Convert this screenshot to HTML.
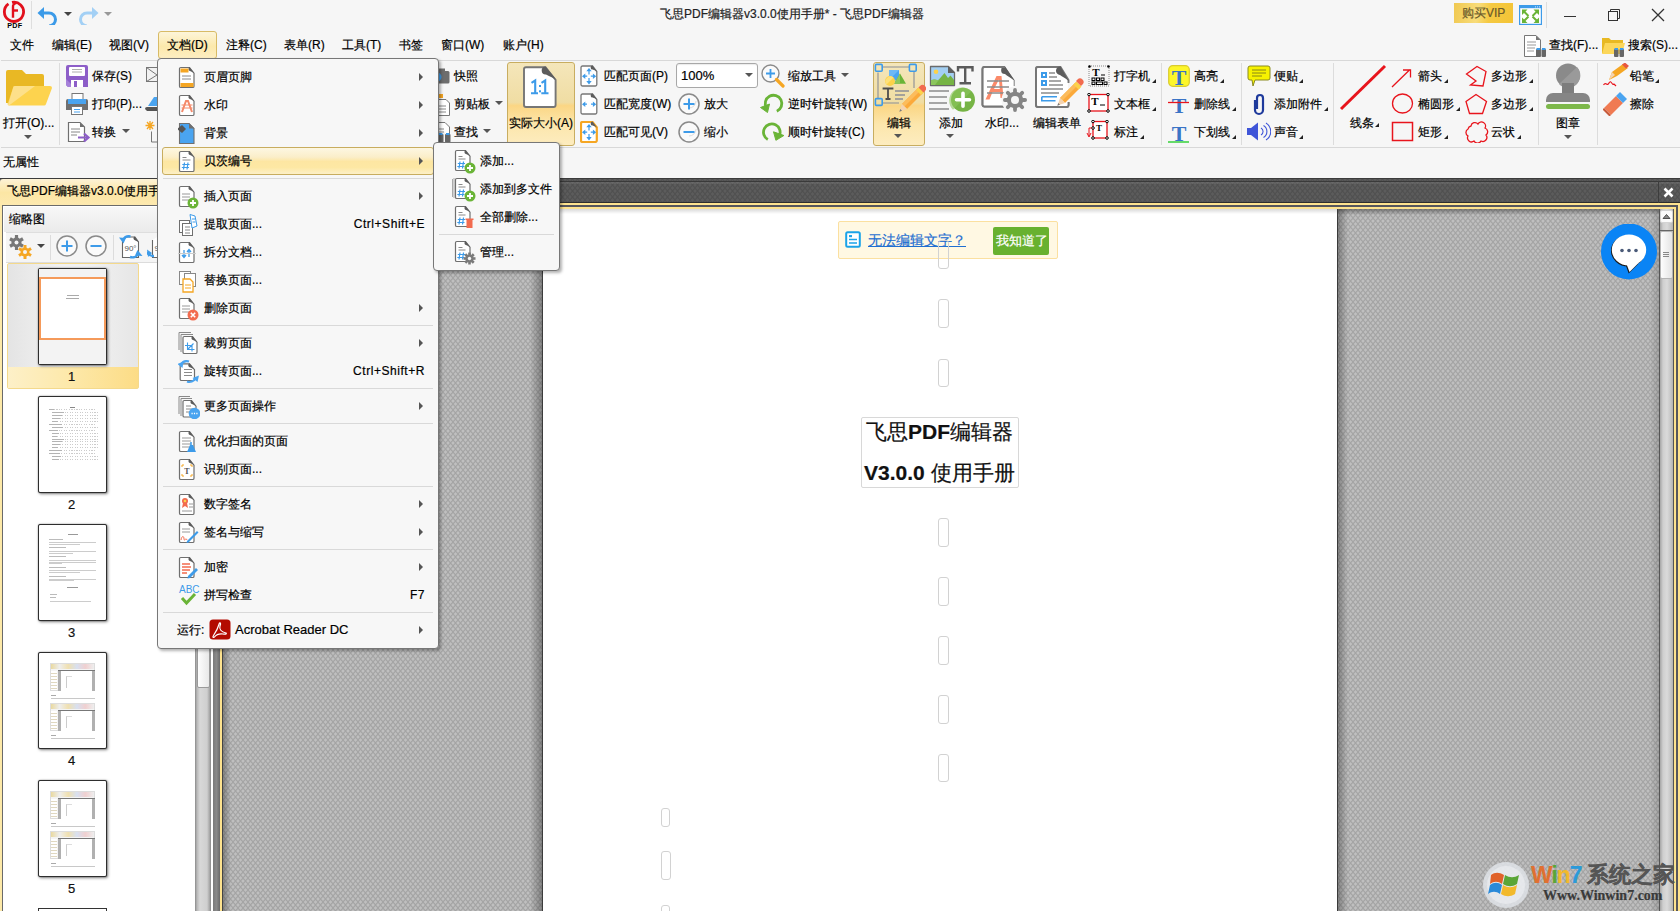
<!DOCTYPE html><html><head><meta charset="utf-8"><style>*{box-sizing:border-box;margin:0;padding:0}
html,body{width:1680px;height:911px;overflow:hidden;background:#f6f6f6;font-family:"Liberation Sans",sans-serif;font-size:12px;color:#000;position:relative}
.a{position:absolute;display:block}
.t{position:absolute;white-space:nowrap;line-height:14px;font-size:12px;-webkit-text-stroke:.2px currentColor}
.hl{position:absolute;height:1px;background:#dcdcdc}
.vl{position:absolute;width:1px;background:#dcdcdc}
.gray{background-color:#b6b6b6;background-image:repeating-linear-gradient(45deg,rgba(0,0,0,.06) 0 1.2px,transparent 1.2px 3.6px),repeating-linear-gradient(-45deg,rgba(0,0,0,.06) 0 1.2px,transparent 1.2px 3.6px)}
.dark{background-color:#5e5e5e;background-image:repeating-linear-gradient(45deg,rgba(0,0,0,.12) 0 1.2px,transparent 1.2px 3.6px),repeating-linear-gradient(-45deg,rgba(0,0,0,.12) 0 1.2px,transparent 1.2px 3.6px)}
.menu{position:absolute;background:#f7f7f7;border:1px solid #777;border-radius:4px;box-shadow:2px 2px 3px rgba(0,0,0,.3)}
.arr{position:absolute;width:0;height:0;border-top:4px solid transparent;border-bottom:4px solid transparent;border-left:4px solid #555}
.sep{position:absolute;height:1px;background:#d9d9d9}
.dd{position:absolute;width:0;height:0;border-left:4px solid transparent;border-right:4px solid transparent;border-top:4px solid #555}
.ca{position:absolute;width:0;height:0;border-left:4px solid transparent;border-bottom:4px solid #222}
.ph{position:absolute;border:1px solid #d2d2d2;border-radius:3px;background:transparent}
.hil{position:absolute;border:1px solid #d8bb66;border-radius:3px;background:linear-gradient(#f7eac4,#f2dea6 45%,#fcd98a 55%,#fde9b6)}
</style></head><body>
<svg class="a" style="left:0px;top:0px" width="30" height="30" viewBox="0 0 30 30"><path d="M12 2.4A9.6 9.6 0 1 1 8.5 3.9" fill="none" stroke="#e2101c" stroke-width="2.8"/><path d="M13 17.8V7A3.5 3.5 0 0 1 16.5 3" fill="none" stroke="#e2101c" stroke-width="2.4"/><path d="M13 10.5H18" stroke="#e2101c" stroke-width="2.4"/><text x="14.8" y="28" font-size="7.2" font-weight="bold" text-anchor="middle" font-family="Liberation Sans" fill="#000" letter-spacing=".3">PDF</text></svg>
<div class="a" style="left:31px;top:1px;width:1px;height:28px;background:#dedede"></div>
<svg class="a" style="left:37px;top:5px" width="22" height="20" viewBox="0 0 22 20"><path d="M4 8 H12 A6.5 6.5 0 0 1 12 21" fill="none" stroke="#3b9ae8" stroke-width="3"/><path d="M0.5 8 L7 2 L7 14 Z" fill="#3b9ae8"/></svg>
<div class="dd" style="left:64px;top:12px;border-top-color:#444"></div>
<svg class="a" style="left:77px;top:5px" width="22" height="20" viewBox="0 0 22 20"><path d="M18 8 H10 A6.5 6.5 0 0 0 10 21" fill="none" stroke="#a3d0f5" stroke-width="3"/><path d="M21.5 8 L15 2 L15 14 Z" fill="#a3d0f5"/></svg>
<div class="dd" style="left:104px;top:12px;border-top-color:#999"></div>
<div class="t" style="left:660px;top:7px;color:#222;">飞思PDF编辑器v3.0.0使用手册* - 飞思PDF编辑器</div>
<div class="a" style="left:1454px;top:3px;width:59px;height:20px;background:linear-gradient(100deg,#f0c850,#f8dc7a 40%,#f5c942 60%,#f4c436)"></div>
<div class="t" style="left:1462px;top:6px;color:#6b5a2a;">购买VIP</div>
<svg class="a" style="left:1519px;top:5px" width="23" height="20" viewBox="0 0 23 20"><rect x="0.6" y="0.6" width="21.8" height="18.8" fill="#fff" stroke="#3d9be9" stroke-width="1.2"/><rect x="0.6" y="0.6" width="21.8" height="2.6" fill="#3d9be9"/><path d="M16 1.9h1M18 1.9h1M20 1.9h1" stroke="#fff" stroke-width=".8"/><g fill="#6ab437"><path d="M3 4.5H8.5L3 10Z M20 4.5H14.5L20 10Z M3 18H8.5L3 12.5Z M20 18H14.5L20 12.5Z"/></g><path d="M5 6.5L9.5 11M18 6.5L13.5 11M5 16L9.5 11.5M18 16L13.5 11.5" stroke="#6ab437" stroke-width="2"/></svg>
<div class="a" style="left:1546px;top:2px;width:1px;height:26px;background:#dedede"></div>
<div class="a" style="left:1564px;top:16px;width:12px;height:1px;background:#333"></div>
<svg class="a" style="left:1607px;top:8px" width="14" height="14" viewBox="0 0 14 14"><rect x="1.5" y="3.5" width="9" height="9" fill="none" stroke="#333"/><path d="M3.5 3.5V1.5H12.5V10.5H10.5" fill="none" stroke="#333"/></svg>
<svg class="a" style="left:1651px;top:8px" width="14" height="14" viewBox="0 0 14 14"><path d="M1 1L13 13M13 1L1 13" stroke="#333" stroke-width="1.3"/></svg>
<div class="hil" style="left:158px;top:31px;width:59px;height:28px;background:linear-gradient(#fdf5d9,#fce9ac 55%,#fdeec2)"></div>
<div class="t" style="left:10px;top:38px;">文件</div>
<div class="t" style="left:52px;top:38px;">编辑(E)</div>
<div class="t" style="left:109px;top:38px;">视图(V)</div>
<div class="t" style="left:167px;top:38px;">文档(D)</div>
<div class="t" style="left:226px;top:38px;">注释(C)</div>
<div class="t" style="left:284px;top:38px;">表单(R)</div>
<div class="t" style="left:342px;top:38px;">工具(T)</div>
<div class="t" style="left:399px;top:38px;">书签</div>
<div class="t" style="left:441px;top:38px;">窗口(W)</div>
<div class="t" style="left:503px;top:38px;">账户(H)</div>
<svg class="a" style="left:1523px;top:34px" width="24" height="24" viewBox="0 0 24 24"><path d="M1.5 1.5H13L17.5 6V22.5H1.5Z" fill="#fff" stroke="#777"/><path d="M13 1.5V6H17.5" fill="#777"/><path d="M4 8h9M4 11h9M4 14h8M4 17h7" stroke="#999"/><rect x="13" y="15" width="4.5" height="8" rx="1" fill="#666"/><rect x="18.5" y="15" width="4.5" height="8" rx="1" fill="#666"/><rect x="13.5" y="14" width="3.5" height="2" fill="#3d9be9"/><rect x="19" y="14" width="3.5" height="2" fill="#3d9be9"/></svg>
<div class="t" style="left:1549px;top:38px;">查找(F)...</div>
<svg class="a" style="left:1601px;top:34px" width="25" height="24" viewBox="0 0 25 24"><path d="M1 4H8L10 6H22V19H1Z" fill="#e8b923"/><path d="M1 20L4 9H24L21 20Z" fill="#fcd75a"/><rect x="13" y="15" width="4.5" height="8" rx="1" fill="#666"/><rect x="18.5" y="15" width="4.5" height="8" rx="1" fill="#666"/><rect x="13.5" y="14" width="3.5" height="2" fill="#3d9be9"/><rect x="19" y="14" width="3.5" height="2" fill="#3d9be9"/></svg>
<div class="t" style="left:1628px;top:38px;">搜索(S)...</div>
<div class="hl" style="left:1px;top:60px;width:1679px;background:#d8d8d8"></div>
<svg class="a" style="left:5px;top:69px" width="48" height="38" viewBox="0 0 48 38"><path d="M1 3a2 2 0 0 1 2-2H17L21 5H37a2 2 0 0 1 2 2V34H1Z" fill="#e9b824"/><path d="M8 19a2 2 0 0 1 2-2H45a2 2 0 0 1 2 2L41 35a2 2 0 0 1-2 1.5H4a2 2 0 0 1-1.5-1.5Z" fill="#fdd34e"/><path d="M3 36L8 19a2 2 0 0 1 2-2H30L4 36.5Z" fill="#fde08a"/></svg>
<div class="t" style="left:3px;top:116px;">打开(O)...</div>
<div class="dd" style="left:24px;top:135px;border-top-color:#555"></div>
<div class="a" style="left:59px;top:63px;width:1px;height:82px;background:#dcdcdc"></div>
<svg class="a" style="left:66px;top:65px" width="22" height="22" viewBox="0 0 22 22"><path d="M0 2a2 2 0 0 1 2-2H20a2 2 0 0 1 2 2V22H2L0 20Z" fill="#8d5ec8"/><path d="M0 14L8 22H2L0 20Z" fill="#a681d9"/><rect x="3" y="2" width="16" height="9" rx="1" fill="#fff"/><path d="M6 4.5h10M6 7h10" stroke="#999" stroke-width=".8"/><rect x="5" y="15" width="12" height="7" fill="#fff"/><rect x="8" y="16" width="3" height="6" fill="#8d5ec8"/></svg>
<div class="t" style="left:92px;top:69px;">保存(S)</div>
<svg class="a" style="left:66px;top:93px" width="22" height="22" viewBox="0 0 22 22"><rect x="6" y="0.5" width="11" height="7" fill="#fff" stroke="#777"/><path d="M0 8a2 2 0 0 1 2-2H20a2 2 0 0 1 2 2V17H0Z" fill="#6f6f6f"/><rect x="2" y="6" width="18" height="5" fill="#4aa4f0"/><rect x="5.5" y="13.5" width="11" height="8" fill="#fff" stroke="#777"/><path d="M8 16.5h6M8 19h6" stroke="#4aa4f0"/></svg>
<div class="t" style="left:92px;top:97px;">打印(P)...</div>
<svg class="a" style="left:67px;top:121px" width="24" height="22" viewBox="0 0 24 22"><path d="M1.5 1.5H13L17.5 6V20.5H1.5Z" fill="#fff" stroke="#6f6f6f" stroke-width="1.2"/><path d="M13 1.5L17.5 6H13Z" fill="#6f6f6f"/><path d="M4 8h9M4 11h9M4 14h6" stroke="#888"/><path d="M11 16.5H21M17 12.5L21.5 16.5L17 20.5" stroke="#8d5ec8" stroke-width="2.2" fill="none"/></svg>
<div class="t" style="left:92px;top:125px;">转换</div>
<div class="dd" style="left:122px;top:129px;border-top-color:#555"></div>
<svg class="a" style="left:146px;top:67px" width="12" height="16" viewBox="0 0 12 16"><rect x="0.5" y="0.5" width="14" height="14" fill="#f2f2f2" stroke="#777"/><path d="M0.5 0.5L11 8L0.5 14.5" fill="none" stroke="#777"/></svg>
<svg class="a" style="left:145px;top:96px" width="13" height="15" viewBox="0 0 13 15"><path d="M0 13a2 2 0 0 1 2-2H14V15H2Z" fill="#555"/><path d="M3 10L9 1H14V10Z" fill="#4aa4f0"/></svg>
<svg class="a" style="left:145px;top:120px" width="13" height="23" viewBox="0 0 13 23"><path d="M5 1v9M0.5 5.5h9M2 2l6 7M8 2l-6 7" stroke="#f5a623" stroke-width="1.3"/><path d="M6.5 11.5V22H14" fill="none" stroke="#777"/></svg>
<svg class="a" style="left:438px;top:68px" width="12" height="16" viewBox="0 0 12 16"><rect x="-6" y="3" width="17.5" height="12.5" rx="1.5" fill="#6d6d6d"/><rect x="-2" y="0.5" width="9" height="4" fill="#6d6d6d"/><circle cx="-1" cy="9" r="4.5" fill="#3d9be9"/></svg>
<div class="t" style="left:454px;top:69px;">快照</div>
<svg class="a" style="left:438px;top:93px" width="12" height="24" viewBox="0 0 12 24"><rect x="0" y="1" width="5" height="4" fill="#f5a623"/><path d="M-2 6.5H8L11.5 10V22.5H-2Z" fill="#fff" stroke="#777"/><path d="M1 13h7M1 16h7M1 19h7" stroke="#888"/></svg>
<div class="t" style="left:454px;top:97px;">剪贴板</div>
<div class="dd" style="left:495px;top:101px;border-top-color:#555"></div>
<svg class="a" style="left:438px;top:121px" width="14" height="22" viewBox="0 0 14 22"><path d="M-2 1.5H7L11.5 6V16" fill="#fff" stroke="#777"/><path d="M0 8h6M0 11h6" stroke="#888"/><rect x="0" y="13" width="5.5" height="8.5" rx="1" fill="#666"/><rect x="7" y="13" width="5.5" height="8.5" rx="1" fill="#666"/><rect x="1" y="12" width="3.5" height="2" fill="#3d9be9"/><rect x="8" y="12" width="3.5" height="2" fill="#3d9be9"/></svg>
<div class="t" style="left:454px;top:125px;">查找</div>
<div class="dd" style="left:483px;top:129px;border-top-color:#555"></div>
<div class="hil" style="left:507px;top:62px;width:68px;height:84px;border-color:#c8ad60;background:linear-gradient(#f4e6ba,#f0dda3 48%,#fbd684 52%,#fce6ac 75%,#fdecbf)"></div>
<svg class="a" style="left:518px;top:62px" width="44" height="50" viewBox="0 0 44 50"><path d="M8 5.3H27.5L37.6 18V43A2 2 0 0 1 35.6 45H8A2 2 0 0 1 6 43V7.3A2 2 0 0 1 8 5.3Z" fill="#fff" stroke="#767676" stroke-width="1.9"/><path d="M27.5 4.4L38.6 18C35 15.5 31 14 28 12.5A3.5 3.5 0 0 1 27.5 4.4Z" fill="#5c5c5c"/><path d="M13.5 20.8L17.2 18.5V31.5M13 31.2H20M23.5 20.8L27.2 18.5V31.5M23.3 31.2H30.5" stroke="#3d9be9" stroke-width="2.1" fill="none"/><rect x="21" y="23" width="2" height="2" fill="#3d9be9"/><rect x="21" y="28.3" width="2" height="2" fill="#3d9be9"/></svg>
<div class="t" style="left:509px;top:116px;">实际大小(A)</div>
<svg class="a" style="left:580px;top:65px" width="18" height="22" viewBox="0 0 18 22"><path d="M2.5 1H12.5L16.8 6.5V19.5A1.5 1.5 0 0 1 15.3 21H2.5A1.5 1.5 0 0 1 1 19.5V2.5A1.5 1.5 0 0 1 2.5 1Z" fill="#fff" stroke="#777" stroke-width="1.3"/><path d="M12.5 0.5L17.2 6.8C15.5 5.5 14 5 12.8 4.5A2 2 0 0 1 12.5 0.5Z" fill="#5c5c5c"/><g fill="#3d9be9" stroke="#3d9be9" stroke-width="1.2"><path d="M9 6V9.5M9 13V16.5M4.5 11.2H7.2M10.8 11.2H13.8" fill="none"/><path d="M9 3L6.3 6.3H11.7Z M9 19.4L6.3 16.1H11.7Z M2 11.2L5.3 8.5V13.9Z M16.2 11.2L12.9 8.5V13.9Z" stroke="none"/></g></svg>
<div class="t" style="left:604px;top:69px;">匹配页面(P)</div>
<svg class="a" style="left:580px;top:93px" width="18" height="22" viewBox="0 0 18 22"><path d="M2.5 1H12.5L16.8 6.5V19.5A1.5 1.5 0 0 1 15.3 21H2.5A1.5 1.5 0 0 1 1 19.5V2.5A1.5 1.5 0 0 1 2.5 1Z" fill="#fff" stroke="#777" stroke-width="1.3"/><path d="M12.5 0.5L17.2 6.8C15.5 5.5 14 5 12.8 4.5A2 2 0 0 1 12.5 0.5Z" fill="#5c5c5c"/><g fill="#3d9be9" stroke="#3d9be9" stroke-width="1.2"><path d="M4.5 11.2H7M11 11.2H13.5" fill="none"/><path d="M2 11.2L5.3 8.5V13.9Z M16.2 11.2L12.9 8.5V13.9Z" stroke="none"/></g></svg>
<div class="t" style="left:604px;top:97px;">匹配宽度(W)</div>
<svg class="a" style="left:580px;top:121px" width="18" height="22" viewBox="0 0 18 22"><path d="M2.5 1H12.5L16.8 6.5V19.5A1.5 1.5 0 0 1 15.3 21H2.5A1.5 1.5 0 0 1 1 19.5V2.5A1.5 1.5 0 0 1 2.5 1Z" fill="#fff" stroke="#f5a623" stroke-width="2.2"/><path d="M12.5 0.5L17.2 6.8C15.5 5.5 14 5 12.8 4.5A2 2 0 0 1 12.5 0.5Z" fill="#5c5c5c"/><g fill="#3d9be9" stroke="#3d9be9" stroke-width="1.2"><path d="M9 6V9.5M9 13V16.5M4.5 11.2H7.2M10.8 11.2H13.8" fill="none"/><path d="M9 3L6.3 6.3H11.7Z M9 19.4L6.3 16.1H11.7Z M2 11.2L5.3 8.5V13.9Z M16.2 11.2L12.9 8.5V13.9Z" stroke="none"/></g></svg>
<div class="t" style="left:604px;top:125px;">匹配可见(V)</div>
<div class="a" style="left:676px;top:63px;width:82px;height:25px;background:#fff;border:1px solid #a8a8a8;border-radius:3px;box-shadow:inset 0 1px 1px rgba(0,0,0,.08)"></div>
<div class="t" style="left:681px;top:69px;font-size:13px;">100%</div>
<div class="dd" style="left:745px;top:73px;border-top-color:#555"></div>
<svg class="a" style="left:678px;top:93px" width="22" height="22" viewBox="0 0 22 22"><circle cx="11" cy="11" r="10" fill="#fafafa" stroke="#8a8a8a" stroke-width="1.5"/><path d="M11 15A7 7 0 0 0 18 8" stroke="#ddd" fill="none"/><path d="M5.5 11H16.5" stroke="#3d9be9" stroke-width="2"/><path d="M11 5.5V16.5" stroke="#3d9be9" stroke-width="2"/></svg>
<div class="t" style="left:704px;top:97px;">放大</div>
<svg class="a" style="left:678px;top:121px" width="22" height="22" viewBox="0 0 22 22"><circle cx="11" cy="11" r="10" fill="#fafafa" stroke="#8a8a8a" stroke-width="1.5"/><path d="M11 15A7 7 0 0 0 18 8" stroke="#ddd" fill="none"/><path d="M5.5 11H16.5" stroke="#3d9be9" stroke-width="2"/></svg>
<div class="t" style="left:704px;top:125px;">缩小</div>
<svg class="a" style="left:761px;top:64px" width="24" height="24" viewBox="0 0 24 24"><circle cx="9.5" cy="9.5" r="8.5" fill="#fafafa" stroke="#8a8a8a" stroke-width="1.4"/><path d="M5 9.5H14M9.5 5V14" stroke="#3d9be9" stroke-width="1.8"/><path d="M15.5 15.5L22 22" stroke="#f5a623" stroke-width="3.2" stroke-linecap="round"/></svg>
<div class="t" style="left:788px;top:69px;">缩放工具</div>
<div class="dd" style="left:841px;top:73px;border-top-color:#555"></div>
<svg class="a" style="left:760px;top:92px" width="26" height="24" viewBox="0 0 26 24"><path d="M16.8 19.2A8.3 8.3 0 1 0 6.5 16" fill="none" stroke="#6ab437" stroke-width="2.8"/><path d="M0.5 15.5L9.5 12L7.5 20.5Z" fill="#6ab437" stroke="#6ab437" stroke-linejoin="round"/></svg>
<div class="t" style="left:788px;top:97px;">逆时针旋转(W)</div>
<svg class="a" style="left:762px;top:120px" width="26" height="24" viewBox="0 0 26 24"><path d="M5.8 19.5A8.3 8.3 0 1 1 17.3 15.8" fill="none" stroke="#6ab437" stroke-width="2.8"/><path d="M11.5 11.8L21.9 15.5L13.9 20.3Z" fill="#6ab437" stroke="#6ab437" stroke-linejoin="round"/></svg>
<div class="t" style="left:788px;top:125px;">顺时针旋转(C)</div>
<div class="hil" style="left:873px;top:62px;width:52px;height:84px;border-color:#c8ad60;background:linear-gradient(#f4e6ba,#f0dda3 48%,#fbd684 52%,#fce6ac 75%,#fdecbf)"></div>
<svg class="a" style="left:872px;top:62px" width="54" height="54" viewBox="0 0 54 54"><path d="M10.5 5H37M42 10V26M6 10.5V36M10.5 41H27" stroke="#8a8d96" stroke-width="1.1" fill="none"/><rect x="3.4" y="2.4" width="6.8" height="6.8" rx="1" fill="none" stroke="#3d9be9" stroke-width="1.6"/><rect x="37.4" y="2.4" width="6.8" height="6.8" rx="1" fill="none" stroke="#3d9be9" stroke-width="1.6"/><rect x="3.4" y="36.6" width="6.8" height="6.8" rx="1" fill="none" stroke="#3d9be9" stroke-width="1.6"/><rect x="17" y="8" width="10" height="10.5" fill="#4aa4f0"/><path d="M17 8H27L17 18Z" fill="#6cb8f5"/><path d="M22 21.8L28 11.5L34 21.8Z" fill="#6ab437"/><path d="M22 21.8L28 11.5V21.8Z" fill="#8cc65e"/><circle cx="18" cy="19" r="5" fill="#fcd24a"/><path d="M14.5 22.5L21.5 15.5A5 5 0 0 0 14.5 22.5Z" fill="#fde07a"/><path d="M11.5 27.5V26.5H20.5V27.5M16 26.5V37M13.5 37H18.5" stroke="#4d4d4d" stroke-width="1.8" fill="none"/><path d="M23 29h14M23 33h10M23 37h8" stroke="#8a8d96" stroke-width="1.3"/><path d="M30 42L46 26L51 31L35 47Z" fill="#fba93a"/><path d="M30 42L46 26L48.5 28.5L32.5 44.5Z" fill="#fcbc5c"/><path d="M44 28L47 25L52 30L49 33Z" fill="#fcd24a"/><path d="M46.5 25.5L48 24A2.5 2.5 0 0 1 53 29L51.5 30.5Z" fill="#f26b4f"/><path d="M30 42L35 47L27.5 49.5Z" fill="#f4d3b0"/><path d="M28.3 47L30 48.8L27.3 49.7Z" fill="#777"/></svg>
<div class="t" style="left:887px;top:116px;">编辑</div>
<div class="dd" style="left:894px;top:134px;border-top-color:#555"></div>
<svg class="a" style="left:926px;top:62px" width="52" height="54" viewBox="0 0 52 54"><path d="M4.5 4.5H22.5L28.5 10.5V23.5H4.5Z" fill="#a3cff2" stroke="#6a6a6a" stroke-width="1.3" stroke-linejoin="round"/><path d="M22 4L29 11H22Z" fill="#5f5f5f"/><path d="M5 23V18.5C7 17 9.5 17 12 18.5L18.5 11L22 16L24.5 13.5L28 18V23Z" fill="#76b445"/><path d="M5 23V18.5C7 17 9.5 17 12 18.5L14 16.3L9 23Z" fill="#8cc65e"/><circle cx="10" cy="9.8" r="2.3" fill="#fcd24a"/><path d="M32 9.5V5.3H46.5V9.5M39.2 5.3V21M33.5 21.3H45" stroke="#5a5a5a" stroke-width="2.4" fill="none"/><path d="M3 29h20M3 35h18M3 41h18M3 47h20" stroke="#8a8a8a" stroke-width="1.6"/><circle cx="37" cy="37.8" r="12" fill="#76b445"/><path d="M27 47.8L45.5 29.3A12 12 0 0 0 27 47.8Z" fill="#8cc65e" opacity=".6"/><path d="M30.5 37.8H43.5M37 31.3V44.3" stroke="#fff" stroke-width="3.6" stroke-linecap="round"/></svg>
<div class="t" style="left:939px;top:116px;">添加</div>
<div class="dd" style="left:946px;top:134px;border-top-color:#555"></div>
<svg class="a" style="left:978px;top:62px" width="54" height="54" viewBox="0 0 54 54"><path d="M26.5 5H6A2 2 0 0 0 4.5 7V43A2 2 0 0 0 6.5 44.5H26" fill="#fff" stroke="#777" stroke-width="1.9"/><path d="M26 5L35.7 18.5V24" fill="#fff" stroke="#777" stroke-width="1.9"/><path d="M5.5 6H26L35.7 18.5V44H5.5Z" fill="#fff"/><path d="M27 4.3L36.5 18.5C33 16 29 14 27 12A3 3 0 0 1 27 4.3Z" fill="#5c5c5c"/><path d="M4.5 7V43A2 2 0 0 0 6.5 44.5H26M4.5 7A2 2 0 0 1 6.5 5H27" fill="none" stroke="#777" stroke-width="1.9"/><path d="M7.5 37.5L18.5 14H23.5L25.5 36H22.5L22 30H14.5L11.5 37.5Z M16 27H21.8L21 17.5Z" fill="#fb8a6a" fill-rule="evenodd"/><path d="M9 19h22M9 25h22M9 31h17" stroke="#8c8c8c" stroke-width="1.7"/><circle cx="37" cy="38" r="13.5" fill="#f6f6f6"/><g transform="translate(37,38)" fill="#858585"><rect x="-1.9" y="-12" width="3.8" height="24" rx="1.9" transform="rotate(0)"/><rect x="-1.9" y="-12" width="3.8" height="24" rx="1.9" transform="rotate(45)"/><rect x="-1.9" y="-12" width="3.8" height="24" rx="1.9" transform="rotate(90)"/><rect x="-1.9" y="-12" width="3.8" height="24" rx="1.9" transform="rotate(135)"/><circle r="8.2"/><circle r="4" fill="#f6f6f6"/></g></svg>
<div class="t" style="left:985px;top:116px;">水印...</div>
<svg class="a" style="left:1030px;top:62px" width="54" height="54" viewBox="0 0 54 54"><path d="M30 5H8A2 2 0 0 0 6 7V43A2 2 0 0 0 8 45H36.5A2 2 0 0 0 38.5 43V40" fill="none" stroke="#777" stroke-width="1.9"/><path d="M7 6H30L38 19V44H7Z" fill="#fff"/><path d="M6 7V43A2 2 0 0 0 8 45H36.5A2 2 0 0 0 38.5 43V40M6 7A2 2 0 0 1 8 5H30.5L38.5 18V21" fill="none" stroke="#777" stroke-width="1.9"/><path d="M30.5 4.5L38.7 19C35.5 16 32 14.5 30 13A3 3 0 0 1 30.5 4.5Z" fill="#5c5c5c"/><rect x="11" y="10" width="6" height="6" fill="#3d9be9"/><rect x="13" y="12" width="2" height="2" fill="#fff"/><rect x="11" y="18" width="6" height="6" fill="#3d9be9"/><rect x="13" y="20" width="2" height="2" fill="#fff"/><path d="M19 11h6M19 15h8M19 19h12M19 23h14M11 27h22M11 31h18" stroke="#8c8c8c" stroke-width="1.5"/><path d="M11.8 34.8H27M11.8 34.8V38.8H25.5" fill="none" stroke="#3d9be9" stroke-width="1.6"/><path d="M30 36L45.5 20.5L50.5 25.5L35 41Z" fill="#fba93a"/><path d="M30 36L45.5 20.5L48 23L32.5 38.5Z" fill="#fcbc5c"/><path d="M43.5 22.5L46.5 19.5L51.5 24.5L48.5 27.5Z" fill="#fcd24a"/><path d="M46 19L47.5 17.5A2.5 2.5 0 0 1 52.5 22.5L51 24Z" fill="#f26b4f"/><path d="M30 36L35 41L27.5 43.5Z" fill="#f4d3b0"/><path d="M28.3 41L30 42.8L27.3 43.7Z" fill="#777"/></svg>
<div class="t" style="left:1033px;top:116px;">编辑表单</div>
<svg class="a" style="left:1088px;top:65px" width="23" height="23" viewBox="0 0 23 23"><rect x="1" y="1" width="20" height="20" fill="none" stroke="#888" stroke-dasharray="1 1"/><g fill="#000"><circle cx="1.5" cy="1.5" r="1.3"/><circle cx="20.5" cy="1.5" r="1.3"/></g><text x="8" y="11" font-size="11" font-weight="bold" text-anchor="middle" font-family="Liberation Serif" fill="#000">T</text><path d="M13 10h4" stroke="#000"/><g fill="none" stroke="#000" stroke-width="1"><rect x="4" y="13" width="3" height="2.5"/><rect x="8.5" y="13" width="3" height="2.5"/><rect x="13" y="13" width="3" height="2.5"/><rect x="4" y="17" width="3" height="2.5"/><rect x="8.5" y="17" width="6" height="2.5"/><rect x="16" y="17" width="3" height="2.5"/></g></svg>
<div class="t" style="left:1114px;top:69px;">打字机</div>
<div class="ca" style="left:1152px;top:79px"></div>
<svg class="a" style="left:1087px;top:93px" width="24" height="20" viewBox="0 0 24 20"><rect x="2" y="1.5" width="19" height="16.5" fill="#fff" stroke="#e8141c" stroke-width="1.3"/><g fill="#fff" stroke="#000"><circle cx="2" cy="1.5" r="1.3"/><circle cx="21" cy="1.5" r="1.3"/><circle cx="2" cy="18" r="1.3"/><circle cx="21" cy="18" r="1.3"/></g><text x="8" y="12" font-size="11" font-weight="bold" text-anchor="middle" font-family="Liberation Serif" fill="#000">T</text><path d="M13 12h5" stroke="#000"/></svg>
<div class="t" style="left:1114px;top:97px;">文本框</div>
<div class="ca" style="left:1152px;top:107px"></div>
<svg class="a" style="left:1086px;top:120px" width="25" height="22" viewBox="0 0 25 22"><rect x="7" y="1.5" width="14" height="16.5" fill="#fff" stroke="#e8141c" stroke-width="1.3"/><g fill="#fff" stroke="#000"><circle cx="7" cy="1.5" r="1.3"/><circle cx="21" cy="1.5" r="1.3"/><circle cx="7" cy="18" r="1.3"/><circle cx="21" cy="18" r="1.3"/><circle cx="7" cy="8" r="1.3"/></g><text x="13" y="11" font-size="9" font-weight="bold" text-anchor="middle" font-family="Liberation Serif" fill="#000">T</text><path d="M6 8H3V16M1 13L3 17L5 13" stroke="#e8141c" fill="none"/></svg>
<div class="t" style="left:1114px;top:125px;">标注</div>
<div class="ca" style="left:1140px;top:135px"></div>
<div class="a" style="left:1161px;top:63px;width:1px;height:82px;background:#dcdcdc"></div>
<svg class="a" style="left:1168px;top:65px" width="22" height="22" viewBox="0 0 22 22"><rect x="0.7" y="0.7" width="20.6" height="20.6" rx="4" fill="#fdf62a" stroke="#d9cb30" stroke-width="1.2"/><text x="11" y="19.5" font-size="22" font-weight="bold" text-anchor="middle" font-family="Liberation Serif" fill="#3a74c6">T</text></svg>
<div class="t" style="left:1194px;top:69px;">高亮</div>
<div class="ca" style="left:1220px;top:79px"></div>
<svg class="a" style="left:1168px;top:93px" width="22" height="22" viewBox="0 0 22 22"><text x="11" y="19.5" font-size="22" font-weight="bold" text-anchor="middle" font-family="Liberation Serif" fill="#3a74c6">T</text><path d="M0 9.5H21" stroke="#e8141c" stroke-width="1.3"/></svg>
<div class="t" style="left:1194px;top:97px;">删除线</div>
<div class="ca" style="left:1232px;top:107px"></div>
<svg class="a" style="left:1168px;top:121px" width="22" height="22" viewBox="0 0 22 22"><text x="11" y="19.5" font-size="22" font-weight="bold" text-anchor="middle" font-family="Liberation Serif" fill="#3a74c6">T</text><path d="M0 21H21" stroke="#34d13a" stroke-width="1.5"/></svg>
<div class="t" style="left:1194px;top:125px;">下划线</div>
<div class="ca" style="left:1232px;top:135px"></div>
<div class="a" style="left:1241px;top:63px;width:1px;height:82px;background:#dcdcdc"></div>
<svg class="a" style="left:1247px;top:65px" width="24" height="22" viewBox="0 0 24 22"><path d="M3 1H21a2 2 0 0 1 2 2V13a2 2 0 0 1-2 2H8L6 21L5 15H3a2 2 0 0 1-2-2V3a2 2 0 0 1 2-2Z" fill="#f7f200" stroke="#8a8a20" stroke-width="1"/><path d="M5 5H19M5 8H19M5 11H15" stroke="#7a7a18" stroke-width=".9"/></svg>
<div class="t" style="left:1274px;top:69px;">便贴</div>
<div class="ca" style="left:1299px;top:79px"></div>
<svg class="a" style="left:1253px;top:92px" width="12" height="25" viewBox="0 0 12 25"><path d="M2 8V18a4 4 0 0 0 8 0V6a3 3 0 0 0-6 0V17" fill="none" stroke="#1e3a9c" stroke-width="2.2"/></svg>
<div class="t" style="left:1274px;top:97px;">添加附件</div>
<div class="ca" style="left:1324px;top:107px"></div>
<svg class="a" style="left:1247px;top:122px" width="24" height="19" viewBox="0 0 24 19"><path d="M0 6H4L11 0.5V18.5L4 13H0Z" fill="#3f55d8"/><path d="M14 6A4 4 0 0 1 14 13M16.5 3.5A7 7 0 0 1 16.5 15.5M19 1A10 10 0 0 1 19 18" fill="none" stroke="#3f55d8" stroke-width="1.1"/></svg>
<div class="t" style="left:1274px;top:125px;">声音</div>
<div class="ca" style="left:1299px;top:135px"></div>
<div class="a" style="left:1333px;top:63px;width:1px;height:82px;background:#dcdcdc"></div>
<svg class="a" style="left:1338px;top:63px" width="50" height="50" viewBox="0 0 50 50"><path d="M3 46L47 3" stroke="#e8141c" stroke-width="3"/></svg>
<div class="t" style="left:1350px;top:116px;">线条</div>
<div class="ca" style="left:1375px;top:123px"></div>
<svg class="a" style="left:1391px;top:67px" width="22" height="22" viewBox="0 0 22 22"><path d="M1 20L19 2.5M12 3H19.5V10.5" stroke="#e8141c" stroke-width="1.3" fill="none"/></svg>
<div class="t" style="left:1418px;top:69px;">箭头</div>
<div class="ca" style="left:1444px;top:79px"></div>
<svg class="a" style="left:1391px;top:93px" width="24" height="22" viewBox="0 0 24 22"><ellipse cx="11.5" cy="10.5" rx="10" ry="9.5" fill="none" stroke="#e8141c" stroke-width="1.3"/></svg>
<div class="t" style="left:1418px;top:97px;">椭圆形</div>
<div class="ca" style="left:1456px;top:107px"></div>
<svg class="a" style="left:1391px;top:121px" width="24" height="22" viewBox="0 0 24 22"><rect x="1.5" y="1.5" width="20" height="18" fill="none" stroke="#e8141c" stroke-width="1.5"/></svg>
<div class="t" style="left:1418px;top:125px;">矩形</div>
<div class="ca" style="left:1444px;top:135px"></div>
<svg class="a" style="left:1465px;top:65px" width="24" height="24" viewBox="0 0 24 24"><path d="M1.5 9L12 1.5L21 6.5L18 21L5.5 20L11 16Z" fill="none" stroke="#e8141c" stroke-width="1.3"/></svg>
<div class="t" style="left:1491px;top:69px;">多边形</div>
<div class="ca" style="left:1529px;top:79px"></div>
<svg class="a" style="left:1465px;top:93px" width="24" height="22" viewBox="0 0 24 22"><path d="M11 1.5L21.5 8.5L17.5 20.5H4.5L1 8.5Z" fill="none" stroke="#e8141c" stroke-width="1.3"/></svg>
<div class="t" style="left:1491px;top:97px;">多边形</div>
<div class="ca" style="left:1529px;top:107px"></div>
<svg class="a" style="left:1465px;top:121px" width="24" height="22" viewBox="0 0 24 22"><path d="M6 5A4 4 0 0 1 13 3A4 4 0 0 1 20 7A4 4 0 0 1 21 14A4 4 0 0 1 16 20A4 4 0 0 1 9 20A4 4 0 0 1 3 15A4 4 0 0 1 3 8A4 4 0 0 1 6 5Z" fill="none" stroke="#e8141c" stroke-width="1.3"/></svg>
<div class="t" style="left:1491px;top:125px;">云状</div>
<div class="ca" style="left:1517px;top:135px"></div>
<div class="a" style="left:1538px;top:63px;width:1px;height:82px;background:#dcdcdc"></div>
<svg class="a" style="left:1545px;top:63px" width="46" height="48" viewBox="0 0 46 48"><circle cx="23" cy="12.5" r="12" fill="#8a8a8a"/><path d="M14 21L32 4A12 12 0 0 1 14 21Z" fill="#9a9a9a"/><path d="M17 20H29V31H17Z" fill="#7d7d7d"/><path d="M1 37a7 7 0 0 1 7-7H38a7 7 0 0 1 7 7V39H1Z" fill="#858585"/><rect x="1" y="41" width="44" height="5" rx="2.5" fill="#7db84a"/></svg>
<div class="t" style="left:1556px;top:116px;">图章</div>
<div class="dd" style="left:1564px;top:135px;border-top-color:#555"></div>
<div class="a" style="left:1597px;top:63px;width:1px;height:82px;background:#dcdcdc"></div>
<svg class="a" style="left:1603px;top:63px" width="26" height="24" viewBox="0 0 26 24"><path d="M6 17L9 9L20 1L25 5L14 13Z" fill="#f5a623"/><path d="M19 1.5L22 -0.5L26 3L23 5.5Z" fill="#e8573f"/><path d="M6 17L9 9L12 12Z" fill="#f4d3b0"/><path d="M0.5 22C3 18 4 24 6 20S9 23 11 21L13 23" fill="none" stroke="#e8141c" stroke-width="1.2"/></svg>
<div class="t" style="left:1630px;top:69px;">铅笔</div>
<div class="ca" style="left:1655px;top:79px"></div>
<svg class="a" style="left:1603px;top:92px" width="26" height="24" viewBox="0 0 26 24"><path d="M1 16L13 4L20 11L8 23Z" fill="#f07a52"/><path d="M13 4L17 0L24 7L20 11Z" fill="#4aa4f0"/><path d="M1 16L8 23L6.5 24.5L-0.5 17.5Z" fill="#c65a3a"/></svg>
<div class="t" style="left:1630px;top:97px;">擦除</div>
<div class="hl" style="left:1px;top:147px;width:1679px;background:#d8d8d8"></div>
<div class="t" style="left:3px;top:155px;">无属性</div>
<div class="a" style="left:0;top:178px;width:1680px;height:1px;background:#3c3c3c"></div>
<svg class="a" style="left:0;top:179px" width="1680" height="24"><defs><pattern id="dp" width="5" height="6" patternUnits="userSpaceOnUse"><rect width="5" height="6" fill="#505050"/><path d="M2.5 0.9L4.3 3L2.5 5.1L0.7 3Z M0 -2.1L1.8 0L0 2.1L-1.8 0Z M5 -2.1L6.8 0L5 2.1L3.2 0Z M0 3.9L1.8 6L0 8.1L-1.8 6Z M5 3.9L6.8 6L5 8.1L3.2 6Z" fill="#5c5c5c"/></pattern></defs><rect width="1680" height="24" fill="url(#dp)"/></svg>
<div class="a" style="left:0;top:181px;width:1680px;height:1px;background:#3a3a3a"></div>
<div class="a" style="left:0;top:182px;width:1680px;height:2px;background:rgba(255,255,255,.08)"></div>
<div class="a" style="left:0;top:202px;width:1680px;height:1px;background:#2e2e2e"></div>
<div class="a" style="left:0;top:179px;width:172px;height:27px;border-radius:3px 3px 0 0;background:linear-gradient(#fdf2d6,#fce6a4 50%,#fde9b0)"></div>
<div class="t" style="left:7px;top:184px;">飞思PDF编辑器v3.0.0使用手册</div>
<div class="a" style="left:1658px;top:181px;width:1px;height:22px;background:#3d3d3d"></div>
<svg class="a" style="left:1663px;top:187px" width="11" height="11" viewBox="0 0 11 11"><path d="M1.5 1.5L9.5 9.5M9.5 1.5L1.5 9.5" stroke="#fff" stroke-width="2.6"/></svg>
<div class="a" style="left:172px;top:203px;width:1508px;height:2px;background:#fde28e"></div>
<div class="a" style="left:213px;top:205px;width:1465px;height:2px;background:#56565c"></div>
<div class="a" style="left:213px;top:207px;width:1463px;height:2px;background:#fde28e"></div>
<div class="a" style="left:0;top:205px;width:213px;height:706px;background:#fde9a8"></div>
<div class="a" style="left:2px;top:205px;width:211px;height:706px;background:#fff;border-left:1px solid #6a6a6a;border-top:1px solid #6a6a6a"></div>
<div class="a" style="left:4px;top:207px;width:209px;height:25px;background:linear-gradient(#f7f7f7,#ebebeb)"></div>
<div class="t" style="left:9px;top:212px;">缩略图</div>
<div class="a" style="left:6px;top:232px;width:207px;height:31px;background:#f5f5f5;border-top:1px solid #dedede;border-bottom:1px solid #dcdcdc"></div>
<svg class="a" style="left:8px;top:235px" width="24" height="24" viewBox="0 0 24 24"><g transform="translate(8.5,7.5)" fill="#777"><circle r="5"/><path d="M-1.6 -7.5H1.6V7.5H-1.6Z"/><path d="M-1.6 -7.5H1.6V7.5H-1.6Z" transform="rotate(60)"/><path d="M-1.6 -7.5H1.6V7.5H-1.6Z" transform="rotate(120)"/><circle r="2" fill="#f5f5f5"/></g><g transform="translate(17,17)" fill="#f5a623"><circle r="4.5"/><path d="M-1.5 -7H1.5V7H-1.5Z"/><path d="M-1.5 -7H1.5V7H-1.5Z" transform="rotate(60)"/><path d="M-1.5 -7H1.5V7H-1.5Z" transform="rotate(120)"/><circle r="2" fill="#f5f5f5"/></g></svg>
<div class="dd" style="left:37px;top:244px;border-top-color:#444"></div>
<div class="a" style="left:50px;top:235px;width:1px;height:25px;background:#dcdcdc"></div>
<svg class="a" style="left:56px;top:235px" width="22" height="22" viewBox="0 0 22 22"><circle cx="11" cy="11" r="10" fill="#fafafa" stroke="#8a8a8a" stroke-width="1.5"/><path d="M5.5 11H16.5" stroke="#3d9be9" stroke-width="2"/><path d="M11 5.5V16.5" stroke="#3d9be9" stroke-width="2"/></svg>
<svg class="a" style="left:85px;top:235px" width="22" height="22" viewBox="0 0 22 22"><circle cx="11" cy="11" r="10" fill="#fafafa" stroke="#8a8a8a" stroke-width="1.5"/><path d="M5.5 11H16.5" stroke="#3d9be9" stroke-width="2"/></svg>
<div class="a" style="left:113px;top:235px;width:1px;height:25px;background:#dcdcdc"></div>
<svg class="a" style="left:117px;top:233px" width="28" height="27" viewBox="0 0 28 27"><path d="M5.5 7V24.5H21.5V9L18 4H10" fill="#fff" stroke="#666" stroke-width="1.1"/><path d="M17.5 3.5L22 9.5C20 8 18.5 7.5 17.5 7A2 2 0 0 1 17.5 3.5Z" fill="#555"/><text x="13.5" y="17.5" font-size="8" font-family="Liberation Sans" fill="#555" text-anchor="middle">90°</text><path d="M13.5 3.5A7 7 0 0 0 6 7" stroke="#3d9be9" stroke-width="2.4" fill="none"/><path d="M2 4.5L6.5 10.5L9 5Z" fill="#3d9be9"/><path d="M13 24A7 7 0 0 0 21.5 20.5" stroke="#3d9be9" stroke-width="2.4" fill="none"/><path d="M25.5 23L20.5 17L18 22.5Z" fill="#3d9be9"/></svg>
<svg class="a" style="left:147px;top:233px" width="12" height="27" viewBox="0 0 12 27"><path d="M5.5 7V24.5H21.5V9L18 4H10" fill="#fff" stroke="#666" stroke-width="1.1"/><text x="13.5" y="17.5" font-size="8" font-family="Liberation Sans" fill="#555" text-anchor="middle">90°</text><path d="M7 23A7 7 0 0 1 0 19" stroke="#3d9be9" stroke-width="2.4" fill="none"/><path d="M0 16.5L1 24L5 20Z" fill="#3d9be9"/></svg>
<div class="a" style="left:7px;top:263px;width:132px;height:126px;border:1px solid #f4d98c;border-radius:2px;background:linear-gradient(90deg,#e4e4e4,#f2f2f2 40%,#f2f2f2 60%,#e6e6e6)"></div>
<div class="a" style="left:8px;top:367px;width:130px;height:21px;background:linear-gradient(90deg,#fdf0c8,#fde8a8 50%,#fcdc86)"></div>
<div class="a" style="left:38px;top:268px;width:69px;height:97px;background:#fff;border:1px solid #2e2e2e;border-radius:2px;box-shadow:1px 1px 3px rgba(0,0,0,.5),0 0 1px rgba(0,0,0,.6)"></div>
<div class="a" style="left:39px;top:269px;width:67px;height:95px;background:#f3f3f3"></div>
<div class="a" style="left:39px;top:277px;width:67px;height:63px;background:#fff;border:2px solid #f59a5a"></div>
<div class="a" style="left:67px;top:295px;width:12px;height:1px;background:#aaa"></div>
<div class="a" style="left:66px;top:298px;width:13px;height:1px;background:#aaa"></div>
<div class="t" style="left:68px;top:370px;font-size:13px;color:#111;">1</div>
<div class="a" style="left:38px;top:396px;width:69px;height:97px;background:#fff;border:1px solid #2e2e2e;border-radius:2px;box-shadow:1px 1px 3px rgba(0,0,0,.5),0 0 1px rgba(0,0,0,.6)"></div>
<div class="a" style="left:70px;top:407px;width:5px;height:1px;background:#888"></div>
<div class="a" style="left:49px;top:409.0px;width:47px;height:1px;background:repeating-linear-gradient(90deg,#ccc 0 1px,transparent 1px 2.5px)"></div>
<div class="a" style="left:49px;top:409.0px;width:5px;height:1px;background:#b4b4b4"></div>
<div class="a" style="left:52px;top:411.9px;width:47px;height:1px;background:repeating-linear-gradient(90deg,#ccc 0 1px,transparent 1px 2.5px)"></div>
<div class="a" style="left:52px;top:411.9px;width:12px;height:1px;background:#b4b4b4"></div>
<div class="a" style="left:52px;top:414.9px;width:47px;height:1px;background:repeating-linear-gradient(90deg,#ccc 0 1px,transparent 1px 2.5px)"></div>
<div class="a" style="left:52px;top:414.9px;width:10px;height:1px;background:#b4b4b4"></div>
<div class="a" style="left:52px;top:417.9px;width:47px;height:1px;background:repeating-linear-gradient(90deg,#ccc 0 1px,transparent 1px 2.5px)"></div>
<div class="a" style="left:52px;top:417.9px;width:8px;height:1px;background:#b4b4b4"></div>
<div class="a" style="left:52px;top:420.8px;width:47px;height:1px;background:repeating-linear-gradient(90deg,#ccc 0 1px,transparent 1px 2.5px)"></div>
<div class="a" style="left:52px;top:420.8px;width:6px;height:1px;background:#b4b4b4"></div>
<div class="a" style="left:49px;top:423.8px;width:47px;height:1px;background:repeating-linear-gradient(90deg,#ccc 0 1px,transparent 1px 2.5px)"></div>
<div class="a" style="left:49px;top:423.8px;width:13px;height:1px;background:#b4b4b4"></div>
<div class="a" style="left:52px;top:426.7px;width:47px;height:1px;background:repeating-linear-gradient(90deg,#ccc 0 1px,transparent 1px 2.5px)"></div>
<div class="a" style="left:52px;top:426.7px;width:11px;height:1px;background:#b4b4b4"></div>
<div class="a" style="left:49px;top:429.6px;width:47px;height:1px;background:repeating-linear-gradient(90deg,#ccc 0 1px,transparent 1px 2.5px)"></div>
<div class="a" style="left:49px;top:429.6px;width:9px;height:1px;background:#b4b4b4"></div>
<div class="a" style="left:52px;top:432.6px;width:47px;height:1px;background:repeating-linear-gradient(90deg,#ccc 0 1px,transparent 1px 2.5px)"></div>
<div class="a" style="left:52px;top:432.6px;width:7px;height:1px;background:#b4b4b4"></div>
<div class="a" style="left:52px;top:435.6px;width:47px;height:1px;background:repeating-linear-gradient(90deg,#ccc 0 1px,transparent 1px 2.5px)"></div>
<div class="a" style="left:52px;top:435.6px;width:5px;height:1px;background:#b4b4b4"></div>
<div class="a" style="left:52px;top:438.5px;width:47px;height:1px;background:repeating-linear-gradient(90deg,#ccc 0 1px,transparent 1px 2.5px)"></div>
<div class="a" style="left:52px;top:438.5px;width:12px;height:1px;background:#b4b4b4"></div>
<div class="a" style="left:52px;top:441.4px;width:47px;height:1px;background:repeating-linear-gradient(90deg,#ccc 0 1px,transparent 1px 2.5px)"></div>
<div class="a" style="left:52px;top:441.4px;width:10px;height:1px;background:#b4b4b4"></div>
<div class="a" style="left:52px;top:444.4px;width:47px;height:1px;background:repeating-linear-gradient(90deg,#ccc 0 1px,transparent 1px 2.5px)"></div>
<div class="a" style="left:52px;top:444.4px;width:8px;height:1px;background:#b4b4b4"></div>
<div class="a" style="left:52px;top:447.4px;width:47px;height:1px;background:repeating-linear-gradient(90deg,#ccc 0 1px,transparent 1px 2.5px)"></div>
<div class="a" style="left:52px;top:447.4px;width:6px;height:1px;background:#b4b4b4"></div>
<div class="a" style="left:49px;top:450.3px;width:47px;height:1px;background:repeating-linear-gradient(90deg,#ccc 0 1px,transparent 1px 2.5px)"></div>
<div class="a" style="left:49px;top:450.3px;width:13px;height:1px;background:#b4b4b4"></div>
<div class="a" style="left:49px;top:453.2px;width:47px;height:1px;background:repeating-linear-gradient(90deg,#ccc 0 1px,transparent 1px 2.5px)"></div>
<div class="a" style="left:49px;top:453.2px;width:11px;height:1px;background:#b4b4b4"></div>
<div class="a" style="left:52px;top:456.2px;width:47px;height:1px;background:repeating-linear-gradient(90deg,#ccc 0 1px,transparent 1px 2.5px)"></div>
<div class="a" style="left:52px;top:456.2px;width:9px;height:1px;background:#b4b4b4"></div>
<div class="a" style="left:52px;top:459.1px;width:47px;height:1px;background:repeating-linear-gradient(90deg,#ccc 0 1px,transparent 1px 2.5px)"></div>
<div class="a" style="left:52px;top:459.1px;width:7px;height:1px;background:#b4b4b4"></div>
<div class="t" style="left:68px;top:498px;font-size:13px;color:#111;">2</div>
<div class="a" style="left:38px;top:524px;width:69px;height:97px;background:#fff;border:1px solid #2e2e2e;border-radius:2px;box-shadow:1px 1px 3px rgba(0,0,0,.5),0 0 1px rgba(0,0,0,.6)"></div>
<div class="a" style="left:68px;top:534.0px;width:10px;height:1px;background:#999"></div>
<div class="a" style="left:49px;top:538.5px;width:14px;height:1px;background:#bbb"></div>
<div class="a" style="left:49px;top:541.5px;width:47px;height:1px;background:#ccc"></div>
<div class="a" style="left:49px;top:543.5px;width:31px;height:1px;background:#ccc"></div>
<div class="a" style="left:49px;top:547.0px;width:17px;height:1px;background:#bbb"></div>
<div class="a" style="left:49px;top:550.5px;width:47px;height:1px;background:#ccc"></div>
<div class="a" style="left:49px;top:552.5px;width:24px;height:1px;background:#ccc"></div>
<div class="a" style="left:49px;top:555.5px;width:17px;height:1px;background:#bbb"></div>
<div class="a" style="left:49px;top:559.5px;width:47px;height:1px;background:#ccc"></div>
<div class="a" style="left:49px;top:561.5px;width:47px;height:1px;background:#ccc"></div>
<div class="a" style="left:49px;top:562.8px;width:13px;height:1px;background:#ccc"></div>
<div class="a" style="left:49px;top:566.5px;width:17px;height:1px;background:#bbb"></div>
<div class="a" style="left:49px;top:569.5px;width:47px;height:1px;background:#ccc"></div>
<div class="a" style="left:49px;top:571.5px;width:31px;height:1px;background:#ccc"></div>
<div class="a" style="left:49px;top:575.5px;width:17px;height:1px;background:#bbb"></div>
<div class="a" style="left:49px;top:578.5px;width:47px;height:1px;background:#ccc"></div>
<div class="a" style="left:49px;top:580.2px;width:25px;height:1px;background:#ccc"></div>
<div class="a" style="left:67px;top:587.0px;width:11px;height:1px;background:#999"></div>
<div class="a" style="left:50px;top:594.0px;width:7px;height:1px;background:#bbb"></div>
<div class="a" style="left:50px;top:597.0px;width:6px;height:1px;background:#bbb"></div>
<div class="a" style="left:50px;top:601.0px;width:41px;height:1px;background:#ccc"></div>
<div class="t" style="left:68px;top:626px;font-size:13px;color:#111;">3</div>
<div class="a" style="left:38px;top:652px;width:69px;height:97px;background:#fff;border:1px solid #2e2e2e;border-radius:2px;box-shadow:1px 1px 3px rgba(0,0,0,.5),0 0 1px rgba(0,0,0,.6)"></div>
<div class="a" style="left:50px;top:663px;width:45px;height:28px;background:#f4f4f4;border:1px solid #ddd"></div>
<div class="a" style="left:51px;top:664px;width:43px;height:5px;background:linear-gradient(90deg,#e9d9a0,#eee 20%,#f0e0b0 40%,#d8e0f0 60%,#f0d0d0 80%,#eee)"></div>
<div class="a" style="left:58px;top:670px;width:37px;height:1px;background:#777"></div>
<div class="a" style="left:58px;top:671px;width:37px;height:20px;background:#b0b0b0"></div>
<div class="a" style="left:61px;top:671px;width:31px;height:20px;background:#fff"></div>
<div class="a" style="left:66px;top:676px;width:6px;height:12px;border-left:1px solid #ccc;border-top:1px solid #ddd"></div>
<div class="a" style="left:51px;top:671px;width:6px;height:19px;background:repeating-linear-gradient(#fff 0 2px,#e0d8c0 2px 3px)"></div>
<div class="a" style="left:51px;top:695px;width:5px;height:1px;background:#aaa"></div>
<div class="a" style="left:51px;top:698px;width:44px;height:1px;background:#c8c8c8"></div>
<div class="a" style="left:50px;top:703px;width:45px;height:28px;background:#f4f4f4;border:1px solid #ddd"></div>
<div class="a" style="left:51px;top:704px;width:43px;height:5px;background:linear-gradient(90deg,#e9d9a0,#eee 20%,#f0e0b0 40%,#d8e0f0 60%,#f0d0d0 80%,#eee)"></div>
<div class="a" style="left:58px;top:710px;width:37px;height:1px;background:#777"></div>
<div class="a" style="left:58px;top:711px;width:37px;height:20px;background:#b0b0b0"></div>
<div class="a" style="left:61px;top:711px;width:31px;height:20px;background:#fff"></div>
<div class="a" style="left:66px;top:716px;width:6px;height:12px;border-left:1px solid #ccc;border-top:1px solid #ddd"></div>
<div class="a" style="left:51px;top:711px;width:6px;height:19px;background:repeating-linear-gradient(#fff 0 2px,#e0d8c0 2px 3px)"></div>
<div class="a" style="left:51px;top:735px;width:5px;height:1px;background:#aaa"></div>
<div class="a" style="left:51px;top:738px;width:44px;height:1px;background:#c8c8c8"></div>
<div class="t" style="left:68px;top:754px;font-size:13px;color:#111;">4</div>
<div class="a" style="left:38px;top:780px;width:69px;height:97px;background:#fff;border:1px solid #2e2e2e;border-radius:2px;box-shadow:1px 1px 3px rgba(0,0,0,.5),0 0 1px rgba(0,0,0,.6)"></div>
<div class="a" style="left:50px;top:791px;width:45px;height:28px;background:#f4f4f4;border:1px solid #ddd"></div>
<div class="a" style="left:51px;top:792px;width:43px;height:5px;background:linear-gradient(90deg,#e9d9a0,#eee 20%,#f0e0b0 40%,#d8e0f0 60%,#f0d0d0 80%,#eee)"></div>
<div class="a" style="left:58px;top:798px;width:37px;height:1px;background:#777"></div>
<div class="a" style="left:58px;top:799px;width:37px;height:20px;background:#b0b0b0"></div>
<div class="a" style="left:61px;top:799px;width:31px;height:20px;background:#fff"></div>
<div class="a" style="left:66px;top:804px;width:6px;height:12px;border-left:1px solid #ccc;border-top:1px solid #ddd"></div>
<div class="a" style="left:51px;top:799px;width:6px;height:19px;background:repeating-linear-gradient(#fff 0 2px,#e0d8c0 2px 3px)"></div>
<div class="a" style="left:51px;top:823px;width:5px;height:1px;background:#aaa"></div>
<div class="a" style="left:51px;top:826px;width:44px;height:1px;background:#c8c8c8"></div>
<div class="a" style="left:50px;top:831px;width:45px;height:28px;background:#f4f4f4;border:1px solid #ddd"></div>
<div class="a" style="left:51px;top:832px;width:43px;height:5px;background:linear-gradient(90deg,#e9d9a0,#eee 20%,#f0e0b0 40%,#d8e0f0 60%,#f0d0d0 80%,#eee)"></div>
<div class="a" style="left:58px;top:838px;width:37px;height:1px;background:#777"></div>
<div class="a" style="left:58px;top:839px;width:37px;height:20px;background:#b0b0b0"></div>
<div class="a" style="left:61px;top:839px;width:31px;height:20px;background:#fff"></div>
<div class="a" style="left:66px;top:844px;width:6px;height:12px;border-left:1px solid #ccc;border-top:1px solid #ddd"></div>
<div class="a" style="left:51px;top:839px;width:6px;height:19px;background:repeating-linear-gradient(#fff 0 2px,#e0d8c0 2px 3px)"></div>
<div class="a" style="left:51px;top:863px;width:5px;height:1px;background:#aaa"></div>
<div class="a" style="left:51px;top:866px;width:44px;height:1px;background:#c8c8c8"></div>
<div class="t" style="left:68px;top:882px;font-size:13px;color:#111;">5</div>
<div class="a" style="left:38px;top:908px;width:69px;height:5px;background:#fff;border:1px solid #333"></div>
<div class="a" style="left:195px;top:262px;width:16px;height:649px;background:linear-gradient(90deg,#8a8a8a 0,#b8b8b8 2px,#d8d8d8 5px,#cfcfcf 12px,#a0a0a0 15px,#888 16px)"></div>
<div class="a" style="left:197px;top:600px;width:13px;height:88px;background:linear-gradient(90deg,#fdfdfd,#e8e8e8);border:1px solid #9a9a9a;border-radius:2px"></div>
<div class="a" style="left:211px;top:205px;width:2px;height:706px;background:#fff"></div>
<div class="a" style="left:213px;top:205px;width:7px;height:706px;background:linear-gradient(90deg,#7a7a7a,#8a8a8a 50%,#6a6a6a)"></div>
<div class="a" style="left:220px;top:205px;width:2px;height:706px;background:#fde28e"></div>
<div class="a" style="left:222px;top:209px;width:1px;height:702px;background:#444"></div>
<svg class="a" style="left:223px;top:209px" width="1437" height="702"><defs><pattern id="gp" width="5" height="6" patternUnits="userSpaceOnUse"><rect width="5" height="6" fill="#a4a4a4"/><path d="M2.5 0.9L4.3 3L2.5 5.1L0.7 3Z M0 -2.1L1.8 0L0 2.1L-1.8 0Z M5 -2.1L6.8 0L5 2.1L3.2 0Z M0 3.9L1.8 6L0 8.1L-1.8 6Z M5 3.9L6.8 6L5 8.1L3.2 6Z" fill="#bfbfbf"/></pattern></defs><rect width="1437" height="702" fill="url(#gp)"/></svg>
<div class="a" style="left:223px;top:209px;width:1437px;height:6px;background:linear-gradient(rgba(0,0,0,.35),rgba(0,0,0,0))"></div>
<div class="a" style="left:223px;top:209px;width:8px;height:702px;background:linear-gradient(90deg,rgba(0,0,0,.3),rgba(0,0,0,0))"></div>
<div class="a" style="left:530px;top:209px;width:12px;height:702px;background:linear-gradient(90deg,rgba(0,0,0,0),rgba(0,0,0,.3))"></div>
<div class="a" style="left:1338px;top:209px;width:10px;height:702px;background:linear-gradient(90deg,rgba(0,0,0,.3),rgba(0,0,0,0))"></div>
<div class="a" style="left:1650px;top:209px;width:10px;height:702px;background:linear-gradient(90deg,rgba(0,0,0,0),rgba(0,0,0,.15))"></div>
<div class="a" style="left:543px;top:209px;width:794px;height:702px;background:#fff"></div>
<div class="a" style="left:542px;top:209px;width:1px;height:702px;background:#3c3c3c"></div>
<div class="a" style="left:1337px;top:209px;width:1px;height:702px;background:#3a3a3a"></div>
<div class="a" style="left:543px;top:209px;width:794px;height:5px;background:linear-gradient(rgba(0,0,0,.15),rgba(0,0,0,0))"></div>
<div class="a" style="left:1659px;top:209px;width:1px;height:702px;background:#555"></div>
<div class="a" style="left:1660px;top:209px;width:13px;height:702px;background:linear-gradient(90deg,#a5a5a5,#cfcfcf 3px,#dadada 7px,#c4c4c4 11px,#b0b0b0)"></div>
<div class="a" style="left:1660px;top:210px;width:13px;height:13px;background:#fbfbfb;border:1px solid #d4d4d4;border-radius:2px"></div>
<svg class="a" style="left:1662px;top:212px" width="9" height="8" viewBox="0 0 9 8"><path d="M1 6.5L4.5 2.5L8 6.5Z" fill="#8a8a8a" stroke="#333" stroke-width="0.8" stroke-linejoin="round"/></svg>
<div class="a" style="left:1660px;top:230px;width:13px;height:1px;background:#666"></div>
<div class="a" style="left:1660px;top:231px;width:13px;height:48px;background:linear-gradient(90deg,#fdfdfd,#e4e4e4);border:1px solid #b5b5b5;border-radius:2px"></div>
<div class="a" style="left:1663px;top:252px;width:6px;height:1px;background:#888"></div>
<div class="a" style="left:1663px;top:254px;width:6px;height:1px;background:#888"></div>
<div class="a" style="left:1663px;top:256px;width:6px;height:1px;background:#888"></div>
<div class="a" style="left:1673px;top:209px;width:1px;height:702px;background:#555"></div>
<div class="a" style="left:1674px;top:207px;width:2px;height:704px;background:#fde28e"></div>
<div class="a" style="left:1676px;top:205px;width:2px;height:706px;background:#56565c"></div>
<div class="a" style="left:1678px;top:203px;width:2px;height:708px;background:#fde28e"></div>
<svg class="a" style="left:1601px;top:224px" width="56" height="56" viewBox="0 0 56 56"><circle cx="28" cy="27.5" r="28" fill="#0a84f5"/><g transform="translate(-0.8,0.9)" fill="#1a1a1a"><ellipse cx="28" cy="26" rx="17.2" ry="15.6"/><path d="M25.5 40L28.5 48.5L38 39Z"/></g><ellipse cx="28" cy="26" rx="17.2" ry="15.6" fill="#fff"/><path d="M25.5 40L28.5 48L37.5 39Z" fill="#fff"/><circle cx="21" cy="26.5" r="1.8" fill="#4a5a78"/><circle cx="28" cy="26.5" r="1.8" fill="#4a5a78"/><circle cx="35" cy="26.5" r="1.8" fill="#4a5a78"/></svg>
<div class="a" style="left:838px;top:221px;width:220px;height:38px;background:#fff8e3;border:1px solid #fbe0a0;border-radius:2px"></div>
<svg class="a" style="left:845px;top:231px" width="16" height="17" viewBox="0 0 16 17"><rect x="1.2" y="1.2" width="13.6" height="14.6" rx="1.5" fill="#fff" stroke="#1aa3e8" stroke-width="2"/><path d="M4 5h3M4 8.5h8M4 12h8" stroke="#1aa3e8" stroke-width="1.5"/><rect x="4" y="4.2" width="3" height="2" fill="#1aa3e8"/></svg>
<div class="t" style="left:868px;top:233px;font-size:14px;color:#1f6fd1;"><u>无法编辑文字？</u></div>
<div class="a" style="left:993px;top:227px;width:56px;height:28px;background:#68b12f;border-radius:2px"></div>
<div class="t" style="left:996px;top:234px;font-size:13px;color:#fff;">我知道了</div>
<div class="ph" style="left:938px;top:240px;width:11px;height:29px"></div>
<div class="ph" style="left:938px;top:299px;width:11px;height:29px"></div>
<div class="ph" style="left:938px;top:359px;width:11px;height:28px"></div>
<div class="ph" style="left:938px;top:518px;width:11px;height:29px"></div>
<div class="ph" style="left:938px;top:577px;width:11px;height:29px"></div>
<div class="ph" style="left:938px;top:636px;width:11px;height:29px"></div>
<div class="ph" style="left:938px;top:695px;width:11px;height:29px"></div>
<div class="ph" style="left:938px;top:754px;width:11px;height:28px"></div>
<div class="ph" style="left:661px;top:808px;width:9px;height:19px"></div>
<div class="ph" style="left:661px;top:851px;width:10px;height:29px"></div>
<div class="ph" style="left:661px;top:905px;width:9px;height:10px"></div>
<div class="a" style="left:861px;top:417px;width:158px;height:71px;border:1px solid #d8d8d8;border-radius:2px;background:#fff"></div>
<div class="t" style="left:866px;top:425px;font-size:21px;color:#111;;line-height:14px">飞思<b>PDF</b>编辑器</div>
<div class="t" style="left:864px;top:466px;font-size:21px;color:#111;"><b>V3.0.0</b> 使用手册</div>
<svg class="a" style="left:1482px;top:861px" width="48" height="48" viewBox="0 0 48 48"><circle cx="24" cy="24" r="23" fill="#dfe3e8" opacity=".85"/><circle cx="24" cy="24" r="19" fill="#eef0f3" opacity=".6"/><path d="M9 14C13 11 17 11 22 14L20 23C16 20 12 20 8 23Z" fill="#e0622a"/><path d="M23 14C28 17 32 17 37 14L35 23C30 26 26 26 21 23Z" fill="#5aa637"/><path d="M8 24C12 21 16 21 20 24L18 33C14 30 10 30 6 33Z" fill="#2a8ad9"/><path d="M21 24C26 27 30 27 35 24L33 33C28 36 24 36 19 33Z" fill="#f2b92b"/></svg>
<div class="t" style="left:1531px;top:863px;font-size:24px;line-height:24px;font-family:'Liberation Sans';font-weight:bold;letter-spacing:-1px;transform:scaleX(.95);transform-origin:left"><span style="color:#e07030">W</span><span style="color:#5aa637">i</span><span style="color:#f2b92b">n</span><span style="color:#2a9ad9">7</span></div>
<div class="t" style="left:1587px;top:863px;font-size:21.5px;line-height:24px;font-weight:bold;color:#555">系统之家</div>
<div class="t" style="left:1543px;top:889px;font-size:14px;line-height:14px;font-family:'Liberation Serif';font-weight:bold;color:#3a3a3a">Www.Winwin7.com</div>
<div class="menu" style="left:157px;top:58px;width:282px;height:591px"></div>
<div class="hil" style="left:162px;top:147px;width:272px;height:28px;border-color:#c8ad5f;background:linear-gradient(#fdf7e2,#fbeec9 35%,#fde6a2 52%,#fde8a4 75%,#fdf0c8)"></div>
<svg class="a" style="left:178px;top:66px" width="22" height="24" viewBox="0 0 22 24"><path d="M2.8 1.5H11.5L16 7.2V20.2A1.3 1.3 0 0 1 14.7 21.5H2.8A1.3 1.3 0 0 1 1.5 20.2V2.8A1.3 1.3 0 0 1 2.8 1.5Z" fill="#fff" stroke="#6f6f6f" stroke-width="1.2"/><path d="M11.5 1L16.4 7.5C15 6.2 13.3 5.5 12 5A2.2 2.2 0 0 1 11.5 1Z" fill="#5c5c5c"/><rect x="2.5" y="2.5" width="8" height="4" fill="#f5a623"/><rect x="2.5" y="17" width="13" height="4" fill="#f5a623"/><path d="M4 10h9M4 13h9" stroke="#888"/></svg>
<div class="t" style="left:204px;top:70px;">页眉页脚</div>
<div class="arr" style="left:419px;top:73px"></div>
<svg class="a" style="left:178px;top:94px" width="22" height="24" viewBox="0 0 22 24"><path d="M2.8 1.5H11.5L16 7.2V20.2A1.3 1.3 0 0 1 14.7 21.5H2.8A1.3 1.3 0 0 1 1.5 20.2V2.8A1.3 1.3 0 0 1 2.8 1.5Z" fill="#fff" stroke="#6f6f6f" stroke-width="1.2"/><path d="M11.5 1L16.4 7.5C15 6.2 13.3 5.5 12 5A2.2 2.2 0 0 1 11.5 1Z" fill="#5c5c5c"/><path d="M4 18L8 7H10L14 18" fill="none" stroke="#f48a6b" stroke-width="2"/><path d="M3.5 11h11M3.5 14h11" stroke="#f48a6b"/></svg>
<div class="t" style="left:204px;top:98px;">水印</div>
<div class="arr" style="left:419px;top:101px"></div>
<svg class="a" style="left:178px;top:122px" width="22" height="24" viewBox="0 0 22 24"><path d="M1.5 1.5H11L16 6.5V21.5H1.5Z" fill="#4aa4f0" stroke="#6f6f6f" stroke-width="1.1"/><path d="M11 1L16.5 6.5H11Z" fill="#6f6f6f"/><path d="M-1 7L4 3L8 7L4 11Z" fill="#555"/></svg>
<div class="t" style="left:204px;top:126px;">背景</div>
<div class="arr" style="left:419px;top:129px"></div>
<svg class="a" style="left:178px;top:150px" width="22" height="24" viewBox="0 0 22 24"><path d="M2.8 1.5H11.5L16 7.2V20.2A1.3 1.3 0 0 1 14.7 21.5H2.8A1.3 1.3 0 0 1 1.5 20.2V2.8A1.3 1.3 0 0 1 2.8 1.5Z" fill="#fff" stroke="#6f6f6f" stroke-width="1.2"/><path d="M11.5 1L16.4 7.5C15 6.2 13.3 5.5 12 5A2.2 2.2 0 0 1 11.5 1Z" fill="#5c5c5c"/><path d="M4.5 7.5h4M4.5 10h8" stroke="#8a8a8a" stroke-width="1"/><path d="M6.5 12.5L5.5 19.5M10 12.5L9 19.5M4.3 14.5H11.5M3.8 17.5H11" stroke="#3d9be9" stroke-width="1.2"/></svg>
<div class="t" style="left:204px;top:154px;">贝茨编号</div>
<div class="arr" style="left:419px;top:157px"></div>
<div class="sep" style="left:163px;top:178px;width:270px"></div>
<svg class="a" style="left:178px;top:185px" width="22" height="24" viewBox="0 0 22 24"><path d="M2.8 1.5H11.5L16 7.2V20.2A1.3 1.3 0 0 1 14.7 21.5H2.8A1.3 1.3 0 0 1 1.5 20.2V2.8A1.3 1.3 0 0 1 2.8 1.5Z" fill="#fff" stroke="#6f6f6f" stroke-width="1.2"/><path d="M11.5 1L16.4 7.5C15 6.2 13.3 5.5 12 5A2.2 2.2 0 0 1 11.5 1Z" fill="#5c5c5c"/><path d="M4 9h8" stroke="#999"/><path d="M4 12h8" stroke="#999"/><path d="M4 15h8" stroke="#999"/><circle cx="15" cy="18" r="5.5" fill="#6ab437"/><path d="M12 18h6M15 15v6" stroke="#fff" stroke-width="1.8"/></svg>
<div class="t" style="left:204px;top:189px;">插入页面</div>
<div class="arr" style="left:419px;top:192px"></div>
<svg class="a" style="left:178px;top:213px" width="22" height="24" viewBox="0 0 22 24"><rect x="1.5" y="7.5" width="10" height="12" fill="#fff" stroke="#6f6f6f"/><rect x="4.5" y="10.5" width="10" height="12" fill="#fff" stroke="#6f6f6f"/><path d="M7 14h5M7 17h5M7 20h5" stroke="#888"/><path d="M12 1.5L17 3L19 13L14 15Z" fill="#fff" stroke="#3d9be9"/><path d="M14 6h3M14.5 9h3" stroke="#3d9be9"/></svg>
<div class="t" style="left:204px;top:217px;">提取页面...</div>
<div class="t" style="right:1255px;top:217px;font-size:12px;letter-spacing:.55px">Ctrl+Shift+E</div>
<svg class="a" style="left:178px;top:241px" width="22" height="24" viewBox="0 0 22 24"><path d="M2.8 1.5H11.5L16 7.2V20.2A1.3 1.3 0 0 1 14.7 21.5H2.8A1.3 1.3 0 0 1 1.5 20.2V2.8A1.3 1.3 0 0 1 2.8 1.5Z" fill="#fff" stroke="#6f6f6f" stroke-width="1.2"/><path d="M11.5 1L16.4 7.5C15 6.2 13.3 5.5 12 5A2.2 2.2 0 0 1 11.5 1Z" fill="#5c5c5c"/><path d="M6 9V16M4 14L6 16.5L8 14M11 16V9M9 11L11 8.5L13 11" stroke="#3d9be9" stroke-width="1.3" fill="none"/><path d="M0 12.5h18" stroke="#ccc"/></svg>
<div class="t" style="left:204px;top:245px;">拆分文档...</div>
<svg class="a" style="left:178px;top:269px" width="22" height="24" viewBox="0 0 22 24"><rect x="1.5" y="2.5" width="11" height="13" fill="#fff" stroke="#888"/><rect x="6.5" y="4.5" width="11" height="13" fill="#fff" stroke="#888"/><path d="M5 10H12L15 13V23H5Z" fill="#fff" stroke="#f5a623" stroke-width="1.3"/><path d="M7 16h6M7 19h6" stroke="#f5a623"/></svg>
<div class="t" style="left:204px;top:273px;">替换页面...</div>
<svg class="a" style="left:178px;top:297px" width="22" height="24" viewBox="0 0 22 24"><path d="M2.8 1.5H11.5L16 7.2V20.2A1.3 1.3 0 0 1 14.7 21.5H2.8A1.3 1.3 0 0 1 1.5 20.2V2.8A1.3 1.3 0 0 1 2.8 1.5Z" fill="#fff" stroke="#6f6f6f" stroke-width="1.2"/><path d="M11.5 1L16.4 7.5C15 6.2 13.3 5.5 12 5A2.2 2.2 0 0 1 11.5 1Z" fill="#5c5c5c"/><path d="M4 9h8" stroke="#999"/><path d="M4 12h8" stroke="#999"/><path d="M4 15h8" stroke="#999"/><circle cx="15" cy="18" r="5.5" fill="#f26b4f"/><path d="M12.8 15.8l4.4 4.4M17.2 15.8l-4.4 4.4" stroke="#fff" stroke-width="1.6"/></svg>
<div class="t" style="left:204px;top:301px;">删除页面</div>
<div class="arr" style="left:419px;top:304px"></div>
<div class="sep" style="left:163px;top:325px;width:270px"></div>
<svg class="a" style="left:178px;top:332px" width="22" height="24" viewBox="0 0 22 24"><path d="M1 18V0.5H13" fill="none" stroke="#8a8a8a"/><path d="M3 20V2.5H15" fill="none" stroke="#8a8a8a"/><path d="M6.3 4.5H14.5L19 10.2V20.2A1.3 1.3 0 0 1 17.7 21.5H6.3A1.3 1.3 0 0 1 5 20.2V5.8A1.3 1.3 0 0 1 6.3 4.5Z" fill="#fff" stroke="#6f6f6f" stroke-width="1.2"/><path d="M14.5 4L19.4 10.5C18 9.2 16.3 8.5 15 8A2.2 2.2 0 0 1 14.5 4Z" fill="#5c5c5c"/><path d="M9.5 10.5V17.5H16.5M7 13.5H14V19.5M10 17L15.5 11.5" stroke="#3d9be9" stroke-width="1.1" fill="none"/></svg>
<div class="t" style="left:204px;top:336px;">裁剪页面</div>
<div class="arr" style="left:419px;top:339px"></div>
<svg class="a" style="left:178px;top:360px" width="22" height="24" viewBox="0 0 22 24"><path d="M3.5 3.8H11.5L16.5 9.7V19.2A1.3 1.3 0 0 1 15.2 20.5H3.5A1.3 1.3 0 0 1 2.2 19.2V5.1A1.3 1.3 0 0 1 3.5 3.8Z" fill="#fff" stroke="#6f6f6f" stroke-width="1.2"/><path d="M11.5 3.3L16.9 10C15.5 8.7 13.8 8 12.5 7.5A2.2 2.2 0 0 1 11.5 3.3Z" fill="#5c5c5c"/><path d="M6 9.5h8M6 12.5h8M6 15.5h8" stroke="#8a8a8a"/><path d="M11 1.5A7 7 0 0 0 3 4.5" stroke="#4aa4f0" stroke-width="2.2" fill="none"/><path d="M-0.5 4L5.5 1.5L4.5 8Z" fill="#4aa4f0"/><path d="M9 21.5A7 7 0 0 0 17.5 18.5" stroke="#4aa4f0" stroke-width="2.2" fill="none"/><path d="M21 15.5L19.5 22L14.5 18Z" fill="#4aa4f0"/></svg>
<div class="t" style="left:204px;top:364px;">旋转页面...</div>
<div class="t" style="right:1255px;top:364px;font-size:12px;letter-spacing:.55px">Ctrl+Shift+R</div>
<div class="sep" style="left:163px;top:388px;width:270px"></div>
<svg class="a" style="left:178px;top:395px" width="22" height="24" viewBox="0 0 22 24"><path d="M1 19V1.5H12" fill="none" stroke="#8a8a8a"/><path d="M3 21V3.5H14" fill="none" stroke="#8a8a8a"/><path d="M6.3 5.5H13.5L18 11.2V20.7A1.3 1.3 0 0 1 16.7 22H6.3A1.3 1.3 0 0 1 5 20.7V6.8A1.3 1.3 0 0 1 6.3 5.5Z" fill="#fff" stroke="#6f6f6f" stroke-width="1.2"/><path d="M13.5 5L18.4 11.5C17 10.2 15.3 9.5 14 9A2.2 2.2 0 0 1 13.5 5Z" fill="#5c5c5c"/><path d="M8 11h5M8 14h7M8 17h5" stroke="#8a8a8a"/><circle cx="16.5" cy="18.5" r="5.8" fill="#4aa4f0"/><path d="M13.5 18.5h1.2M15.9 18.5h1.2M18.3 18.5h1.2" stroke="#fff" stroke-width="1.5"/></svg>
<div class="t" style="left:204px;top:399px;">更多页面操作</div>
<div class="arr" style="left:419px;top:402px"></div>
<div class="sep" style="left:163px;top:423px;width:270px"></div>
<svg class="a" style="left:178px;top:430px" width="22" height="24" viewBox="0 0 22 24"><path d="M2.8 1.5H11.5L16 7.2V20.2A1.3 1.3 0 0 1 14.7 21.5H2.8A1.3 1.3 0 0 1 1.5 20.2V2.8A1.3 1.3 0 0 1 2.8 1.5Z" fill="#fff" stroke="#6f6f6f" stroke-width="1.2"/><path d="M11.5 1L16.4 7.5C15 6.2 13.3 5.5 12 5A2.2 2.2 0 0 1 11.5 1Z" fill="#5c5c5c"/><path d="M4 8h9" stroke="#999"/><path d="M4 11h9" stroke="#999"/><path d="M4 14h9" stroke="#999"/><path d="M4 17h9" stroke="#999"/><path d="M9 22L12 15H15L18 22Z" fill="#3d9be9"/><path d="M13 12v3" stroke="#3d9be9" stroke-width="1.5"/></svg>
<div class="t" style="left:204px;top:434px;">优化扫面的页面</div>
<svg class="a" style="left:178px;top:458px" width="22" height="24" viewBox="0 0 22 24"><path d="M2.8 1.5H11.5L16 7.2V20.2A1.3 1.3 0 0 1 14.7 21.5H2.8A1.3 1.3 0 0 1 1.5 20.2V2.8A1.3 1.3 0 0 1 2.8 1.5Z" fill="#fff" stroke="#6f6f6f" stroke-width="1.2"/><path d="M11.5 1L16.4 7.5C15 6.2 13.3 5.5 12 5A2.2 2.2 0 0 1 11.5 1Z" fill="#5c5c5c"/><path d="M4 9V7H6M12 7h2v2M4 16v2h2M14 16v2h-2" stroke="#f5a623" fill="none"/><text x="9" y="16" font-size="8" font-weight="bold" font-family="Liberation Serif" fill="#555" text-anchor="middle">T</text></svg>
<div class="t" style="left:204px;top:462px;">识别页面...</div>
<div class="sep" style="left:163px;top:486px;width:270px"></div>
<svg class="a" style="left:178px;top:493px" width="22" height="24" viewBox="0 0 22 24"><path d="M2.8 1.5H11.5L16 7.2V20.2A1.3 1.3 0 0 1 14.7 21.5H2.8A1.3 1.3 0 0 1 1.5 20.2V2.8A1.3 1.3 0 0 1 2.8 1.5Z" fill="#fff" stroke="#6f6f6f" stroke-width="1.2"/><path d="M11.5 1L16.4 7.5C15 6.2 13.3 5.5 12 5A2.2 2.2 0 0 1 11.5 1Z" fill="#5c5c5c"/><circle cx="7" cy="8" r="3" fill="#f26b4f"/><circle cx="7" cy="8" r="1.3" fill="#fcd24a"/><path d="M5 10L4 15L7 13L10 15L9 10" fill="#f26b4f"/><path d="M11 11h4M11 14h4M4 18h10" stroke="#999"/></svg>
<div class="t" style="left:204px;top:497px;">数字签名</div>
<div class="arr" style="left:419px;top:500px"></div>
<svg class="a" style="left:178px;top:521px" width="22" height="24" viewBox="0 0 22 24"><path d="M2.8 1.5H11.5L16 7.2V20.2A1.3 1.3 0 0 1 14.7 21.5H2.8A1.3 1.3 0 0 1 1.5 20.2V2.8A1.3 1.3 0 0 1 2.8 1.5Z" fill="#fff" stroke="#6f6f6f" stroke-width="1.2"/><path d="M11.5 1L16.4 7.5C15 6.2 13.3 5.5 12 5A2.2 2.2 0 0 1 11.5 1Z" fill="#5c5c5c"/><path d="M4 8h8" stroke="#999"/><path d="M4 11h8" stroke="#999"/><path d="M3 19C4 14 6 15 6 18S8 16 9 19" stroke="#f26b4f" fill="none"/><path d="M9 20L19 10L20.5 11.5L10.5 21.5L8.5 22Z" fill="#3d9be9"/></svg>
<div class="t" style="left:204px;top:525px;">签名与缩写</div>
<div class="arr" style="left:419px;top:528px"></div>
<div class="sep" style="left:163px;top:549px;width:270px"></div>
<svg class="a" style="left:178px;top:556px" width="22" height="24" viewBox="0 0 22 24"><path d="M2.8 1.5H11.5L16 7.2V20.2A1.3 1.3 0 0 1 14.7 21.5H2.8A1.3 1.3 0 0 1 1.5 20.2V2.8A1.3 1.3 0 0 1 2.8 1.5Z" fill="#fff" stroke="#6f6f6f" stroke-width="1.2"/><path d="M11.5 1L16.4 7.5C15 6.2 13.3 5.5 12 5A2.2 2.2 0 0 1 11.5 1Z" fill="#5c5c5c"/><path d="M4 8h8M4 11h9M4 14h8M4 17h5" stroke="#f26b4f" stroke-width="1.6"/><path d="M10 20L18 12L20 14L12 22L9.5 22.5Z" fill="#3d9be9"/></svg>
<div class="t" style="left:204px;top:560px;">加密</div>
<div class="arr" style="left:419px;top:563px"></div>
<svg class="a" style="left:178px;top:584px" width="22" height="24" viewBox="0 0 22 24"><text x="1" y="9" font-size="10" font-family="Liberation Sans" fill="#3d9be9">ABC</text><path d="M4 14L8.5 19L17 10" stroke="#6ab437" stroke-width="3" fill="none"/></svg>
<div class="t" style="left:204px;top:588px;">拼写检查</div>
<div class="t" style="right:1255px;top:588px;font-size:12px;letter-spacing:.55px">F7</div>
<div class="sep" style="left:163px;top:612px;width:270px"></div>
<div class="t" style="left:177px;top:623px;">运行:</div>
<svg class="a" style="left:209px;top:619px" width="22" height="22" viewBox="0 0 22 22"><rect x="0.5" y="0.5" width="21" height="20" rx="3.5" fill="#b30b00"/><path d="M4.5 16.5C7 13 9 9 10.5 4C11.5 3 12 5 11 7C10 10 12 13 17 14C18 15 16.5 15.5 14 15C10 14.5 7 16 5.5 18C4 19 3.5 18 4.5 16.5Z" fill="none" stroke="#fff" stroke-width="1.2"/></svg>
<div class="t" style="left:235px;top:623px;font-size:13px;">Acrobat Reader DC</div>
<div class="arr" style="left:419px;top:626px"></div>
<div class="menu" style="left:433px;top:142px;width:127px;height:129px"></div>
<svg class="a" style="left:452px;top:149px" width="24" height="25" viewBox="0 0 24 25"><path d="M4.8 1.5H13.5L18 7.2V20.2A1.3 1.3 0 0 1 16.7 21.5H4.8A1.3 1.3 0 0 1 3.5 20.2V2.8A1.3 1.3 0 0 1 4.8 1.5Z" fill="#fff" stroke="#6f6f6f" stroke-width="1.2"/><path d="M13.5 1L18.4 7.5C17 6.2 15.3 5.5 14 5A2.2 2.2 0 0 1 13.5 1Z" fill="#5c5c5c"/><path d="M6.5 7.5h4M6.5 10h7" stroke="#8a8a8a"/><path d="M8 12.5L7 19.5M11.5 12.5L10.5 19.5M5.8 14.5H13M5.3 17.5H12.5" stroke="#3d9be9" stroke-width="1.2"/><circle cx="18" cy="19" r="5.5" fill="#6ab437"/><path d="M15 19h6M18 16v6" stroke="#fff" stroke-width="1.8"/></svg>
<div class="t" style="left:480px;top:154px;">添加...</div>
<svg class="a" style="left:452px;top:177px" width="24" height="25" viewBox="0 0 24 25"><path d="M0.5 2V20M2 1V21" stroke="#aaa"/><path d="M4.8 1.5H13.5L18 7.2V20.2A1.3 1.3 0 0 1 16.7 21.5H4.8A1.3 1.3 0 0 1 3.5 20.2V2.8A1.3 1.3 0 0 1 4.8 1.5Z" fill="#fff" stroke="#6f6f6f" stroke-width="1.2"/><path d="M13.5 1L18.4 7.5C17 6.2 15.3 5.5 14 5A2.2 2.2 0 0 1 13.5 1Z" fill="#5c5c5c"/><path d="M6.5 7.5h4M6.5 10h7" stroke="#8a8a8a"/><path d="M8 12.5L7 19.5M11.5 12.5L10.5 19.5M5.8 14.5H13M5.3 17.5H12.5" stroke="#3d9be9" stroke-width="1.2"/><circle cx="18" cy="19" r="5.5" fill="#6ab437"/><path d="M15 19h6M18 16v6" stroke="#fff" stroke-width="1.8"/></svg>
<div class="t" style="left:480px;top:182px;">添加到多文件</div>
<svg class="a" style="left:452px;top:205px" width="24" height="25" viewBox="0 0 24 25"><path d="M4.8 1.5H13.5L18 7.2V20.2A1.3 1.3 0 0 1 16.7 21.5H4.8A1.3 1.3 0 0 1 3.5 20.2V2.8A1.3 1.3 0 0 1 4.8 1.5Z" fill="#fff" stroke="#6f6f6f" stroke-width="1.2"/><path d="M13.5 1L18.4 7.5C17 6.2 15.3 5.5 14 5A2.2 2.2 0 0 1 13.5 1Z" fill="#5c5c5c"/><path d="M6.5 7.5h4M6.5 10h7" stroke="#8a8a8a"/><path d="M8 12.5L7 19.5M11.5 12.5L10.5 19.5M5.8 14.5H13M5.3 17.5H12.5" stroke="#3d9be9" stroke-width="1.2"/><rect x="14.5" y="15" width="6" height="8" fill="#f26b4f"/><rect x="13.5" y="13.5" width="8" height="1.5" fill="#f26b4f"/></svg>
<div class="t" style="left:480px;top:210px;">全部删除...</div>
<div class="sep" style="left:439px;top:234px;width:115px"></div>
<svg class="a" style="left:452px;top:240px" width="24" height="25" viewBox="0 0 24 25"><path d="M4.8 1.5H13.5L18 7.2V20.2A1.3 1.3 0 0 1 16.7 21.5H4.8A1.3 1.3 0 0 1 3.5 20.2V2.8A1.3 1.3 0 0 1 4.8 1.5Z" fill="#fff" stroke="#6f6f6f" stroke-width="1.2"/><path d="M13.5 1L18.4 7.5C17 6.2 15.3 5.5 14 5A2.2 2.2 0 0 1 13.5 1Z" fill="#5c5c5c"/><path d="M6.5 7.5h4M6.5 10h7" stroke="#8a8a8a"/><path d="M8 12.5L7 19.5M11.5 12.5L10.5 19.5M5.8 14.5H13M5.3 17.5H12.5" stroke="#3d9be9" stroke-width="1.2"/><g transform="translate(17.5,18.5)" fill="#7a7a7a"><circle r="4"/><path d="M-1.3 -6H1.3V6H-1.3Z"/><path d="M-1.3 -6H1.3V6H-1.3Z" transform="rotate(45)"/><path d="M-1.3 -6H1.3V6H-1.3Z" transform="rotate(90)"/><path d="M-1.3 -6H1.3V6H-1.3Z" transform="rotate(135)"/><circle r="1.7" fill="#f7f7f7"/></g></svg>
<div class="t" style="left:480px;top:245px;">管理...</div>
</body></html>
